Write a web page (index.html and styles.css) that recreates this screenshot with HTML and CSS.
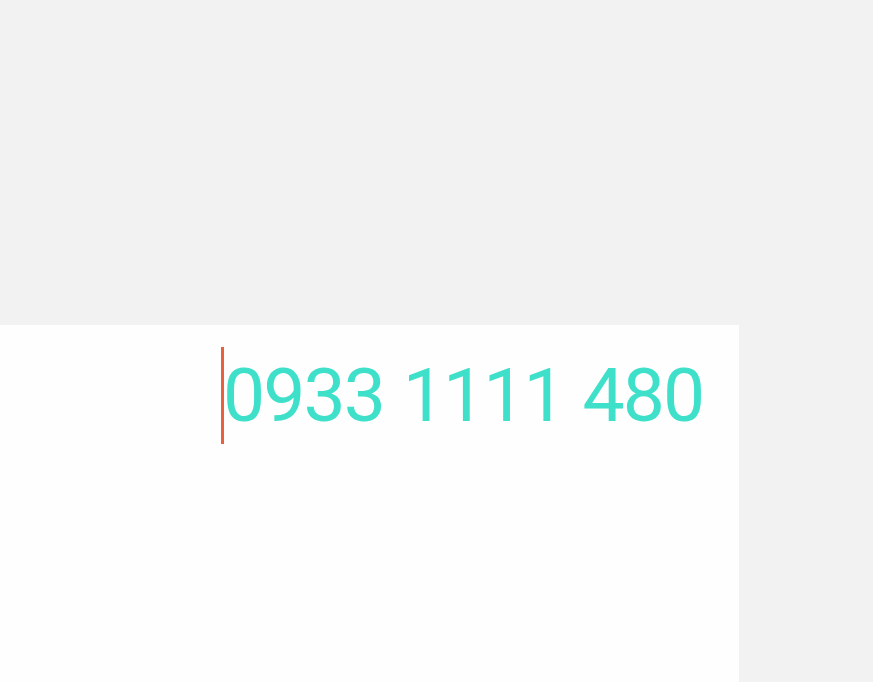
FILE: index.html
```html
<!DOCTYPE html>
<html>
<head>
<meta charset="utf-8">
<link rel="stylesheet" href="styles.css">
</head>
<body>
<div class="page">
  <div class="panel">
    <div class="field">
      <span class="caret"></span>
      <span class="number">0933 1111 480</span>
    </div>
  </div>
</div>
</body>
</html>
```
FILE: styles.css
```css
html, body {
  margin: 0;
  padding: 0;
  background: #f2f2f2;
}
.page {
  width: 873px;
  height: 682px;
  display: flex;
  flex-direction: column;
  padding-top: 325px;
  box-sizing: border-box;
  overflow: hidden;
}
.panel {
  width: 739px;
  flex: 1;
  background: #fefefe;
  padding: 22px 0 0 221px;
  box-sizing: border-box;
}
.field {
  display: flex;
  align-items: center;
  height: 97px;
}
.caret {
  width: 3px;
  height: 97px;
  background: #e8603c;
}
.number {
  font-family: Roboto, "Liberation Sans", sans-serif;
  font-size: 75px;
  letter-spacing: -1.9px;
  word-spacing: 2px;
  color: #3ee0c9;
  line-height: 1;
  white-space: nowrap;
  margin-left: -1px;
  margin-top: 0;
}
```
